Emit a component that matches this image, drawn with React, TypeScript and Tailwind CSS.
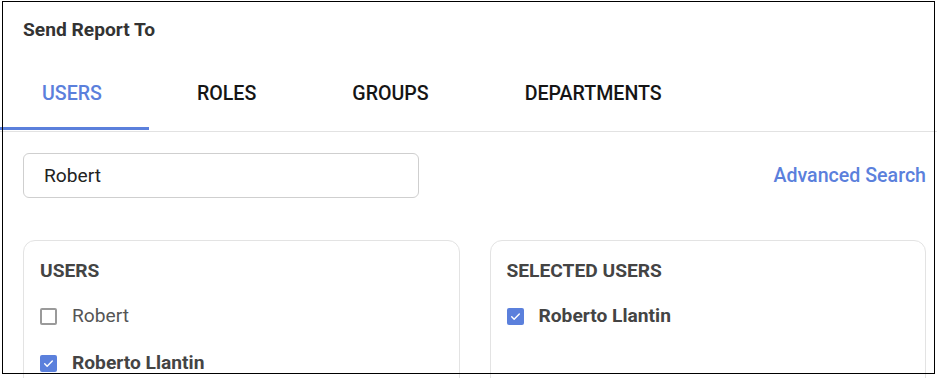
import { useState } from "react";

const tabs = ["USERS", "ROLES", "GROUPS", "DEPARTMENTS"];

function Checkbox({ checked }: { checked: boolean }) {
  if (checked) {
    return (
      <span className="flex h-[17px] w-[17px] shrink-0 items-center justify-center rounded-[2px] bg-[#5b80dc]">
        <svg width="13" height="13" viewBox="0 0 24 24" fill="none">
          <path
            d="M5 12.5l4.5 4.5L19 7.5"
            stroke="#fff"
            strokeWidth="2.6"
            strokeLinecap="round"
            strokeLinejoin="round"
          />
        </svg>
      </span>
    );
  }
  return (
    <span className="h-[17px] w-[17px] shrink-0 rounded-[2px] border-2 border-[#9a9a9a] bg-white" />
  );
}

function UserRow({ name, checked }: { name: string; checked: boolean }) {
  return (
    <label className="flex h-[47px] items-center gap-[15px]">
      <Checkbox checked={checked} />
      <span
        className={
          checked
            ? "text-[19.2px] font-bold text-[#444]"
            : "text-[19.2px] text-[#555]"
        }
      >
        {name}
      </span>
    </label>
  );
}

function App() {
  const [active, setActive] = useState(0);
  const [query, setQuery] = useState("Robert");

  return (
    <div className="relative min-h-screen bg-white font-['Roboto',sans-serif]">
      <div className="pl-[23px] pt-[15px] pb-[15px]">
        <h1 className="text-[19.2px] leading-[30px] font-bold text-[#333]">
          Send Report To
        </h1>
      </div>

      <div className="flex border-b border-[#e2e2e2] pb-px">
        {tabs.map((t, i) => (
          <button
            key={t}
            onClick={() => setActive(i)}
            className={[
              "flex h-[70px] items-center border-b-[3px] pt-px text-[19.6px] font-medium",
              i === 0 ? "pl-[42px] pr-[47px]" : "px-[48px]",
              i === active
                ? "border-[#5b80dc] text-[#5b80dc]"
                : "border-transparent text-[#151515]",
            ].join(" ")}
          >
            {t}
          </button>
        ))}
      </div>

      <div className="pl-[23px] pr-[11px] pt-[21px]">
        <div className="flex items-center justify-between">
          <input
            value={query}
            onChange={(e) => setQuery(e.target.value)}
            className="h-[45px] w-[396px] rounded-[6px] border border-[#cfcfcf] px-[20px] text-[19.2px] text-[#222] outline-none"
          />
          <a className="text-[19.6px] font-medium text-[#5b80dc]">
            Advanced Search
          </a>
        </div>

        <div className="mt-[42px] grid grid-cols-2 gap-[30px]">
          <section className="h-[200px] rounded-[12px] border border-[#e3e3e3] px-[16px] pt-[15px]">
            <h2 className="text-[19.2px] leading-[30px] font-bold text-[#444]">
              USERS
            </h2>
            <div className="mt-[7px]">
              <UserRow name="Robert" checked={false} />
              <UserRow name="Roberto Llantin" checked />
            </div>
          </section>
          <section className="h-[200px] rounded-[12px] border border-[#e3e3e3] px-[16px] pt-[15px]">
            <h2 className="text-[19.2px] leading-[30px] font-bold text-[#444]">
              SELECTED USERS
            </h2>
            <div className="mt-[7px]">
              <UserRow name="Roberto Llantin" checked />
            </div>
          </section>
        </div>
      </div>

      <div className="pointer-events-none absolute left-[2px] top-[1px] h-[373px] w-[933px] border border-black" />
    </div>
  );
}

export default App;
